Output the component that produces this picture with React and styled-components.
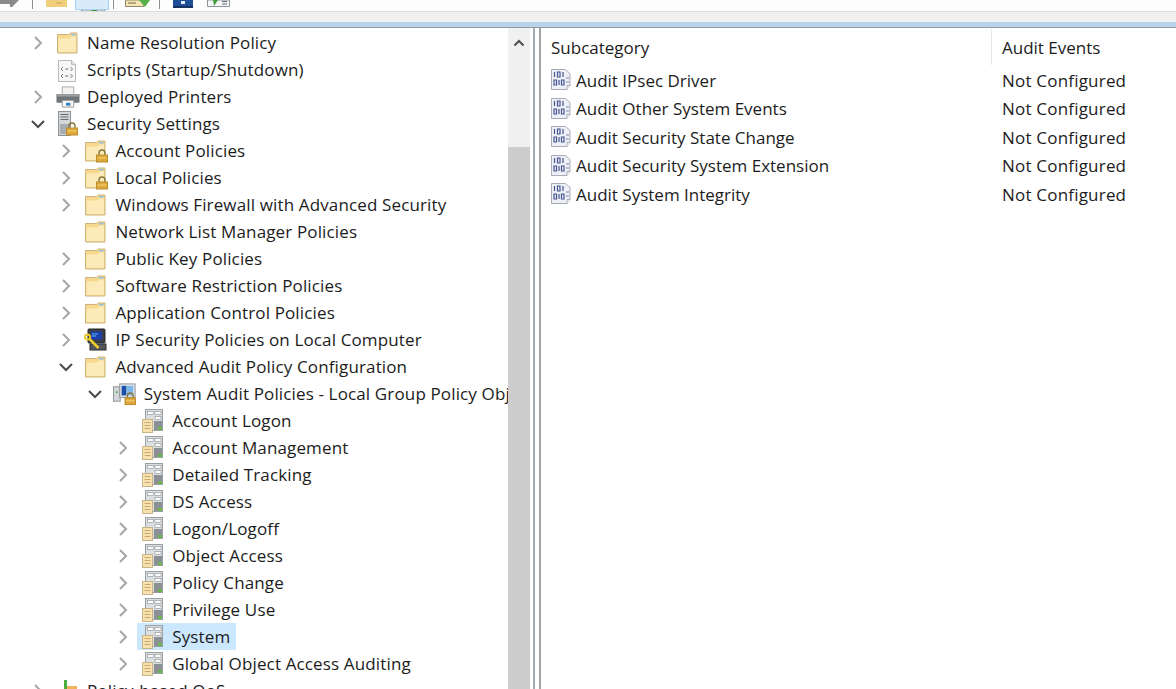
import styled, { createGlobalStyle } from "styled-components";

const GlobalStyle = createGlobalStyle`
  html, body {
    margin: 0;
    height: 100%;
    overflow: hidden;
    background: #fff;
  }
  #root {
    height: 100%;
  }
`;

const LockGlyph = ({ x, y }) => (
  <g transform={`translate(${x} ${y})`}>
    <path d="M3 5V3a3 3 0 0 1 6 0v2" fill="none" stroke="#8a7440" strokeWidth="1.4" />
    <rect x="0.5" y="5" width="11" height="7" fill="#dfa838" stroke="#b98d30" />
    <path d="M1.5 8h9" stroke="#f4d27a" />
  </g>
);

const FolderIcon = ({ lock }) => (
  <svg width="24" height="24" viewBox="0 0 24 24">
    <path d="M1.5 5.5V3.5h11l2-1.5h6.5V22H1.5z" fill="#f6d98e" stroke="#cdb27a" />
    <path d="M2.5 7.5h11l2-2h4.5V21H2.5z" fill="#fcebb8" />
    <path d="M15 3h4.5v1.5H15z" fill="#8fc1e8" />
    {lock && <LockGlyph x={12} y={11} />}
  </svg>
);

const ScriptIcon = () => (
  <svg width="24" height="24" viewBox="0 0 24 24">
    <path d="M2.5 2.5h13l4 4v17h-17z" fill="#f7f7f7" stroke="#b9b9b9" />
    <path d="M15.5 2.5v4h4" fill="#e2e2e2" stroke="#b9b9b9" />
    <path d="M7 9l-2 2 2 2M9 11h3.5M14.5 9l2 2-2 2M7 16l-2 2 2 2M9 18h3.5M14.5 16l2 2-2 2" fill="none" stroke="#6f7a80" />
  </svg>
);

const PrinterIcon = () => (
  <svg width="25" height="24" viewBox="0 0 25 24">
    <path d="M6.5 1.5h12v8h-12z" fill="#f2f2f2" stroke="#a9a9a9" />
    <rect x="0.5" y="9" width="24" height="9" rx="1" fill="#6f7478" />
    <rect x="0.5" y="9" width="24" height="2.5" fill="#9a9fa3" />
    <path d="M6.5 15.5h12v7h-12z" fill="#f7f7f7" stroke="#9a9a9a" />
    <path d="M10.5 18h4.5v3h-4.5z" fill="#2f7fc4" />
  </svg>
);

const ServerLockIcon = () => (
  <svg width="24" height="26" viewBox="0 0 24 26">
    <rect x="2.5" y="0.5" width="12" height="24" fill="#d3d7da" stroke="#8d9296" />
    <path d="M4.5 3.5h8M4.5 6h8M4.5 8.5h8" stroke="#666b70" />
    <rect x="4" y="13" width="9" height="10" fill="#a8adb2" />
    <LockGlyph x={10} y={12} />
  </svg>
);

const IpKeyIcon = () => (
  <svg width="24" height="24" viewBox="0 0 24 24">
    <rect x="4" y="1" width="17" height="14" rx="1" fill="#3b3f44" stroke="#23262a" />
    <rect x="7" y="3.5" width="11" height="8" fill="#1c3fb0" />
    <path d="M8 6h6M8 8h4" stroke="#59b3e8" />
    <rect x="6" y="16" width="16" height="6" fill="#54585c" stroke="#2a2c30" />
    <circle cx="3.5" cy="9" r="2.6" fill="none" stroke="#e8cd28" strokeWidth="2" />
    <path d="M5.5 11l9 9" stroke="#e8cd28" strokeWidth="2.6" />
  </svg>
);

const SystemAuditIcon = () => (
  <svg width="25" height="24" viewBox="0 0 25 24">
    <rect x="0.5" y="4.5" width="7" height="15" fill="#d4d7da" stroke="#8d9296" />
    <path d="M3 10h2" stroke="#3caa3c" strokeWidth="1.5" />
    <rect x="7" y="1.5" width="16" height="14" fill="#dfe7ee" stroke="#8d9296" />
    <rect x="9" y="3.5" width="5" height="10" fill="#1d4fa8" />
    <rect x="14" y="3.5" width="7" height="10" fill="#7db8e6" />
    <LockGlyph x={12} y={11} />
  </svg>
);

const PolicyIcon = () => (
  <svg width="24" height="24" viewBox="0 0 24 24">
    <rect x="4.5" y="0.5" width="17" height="21" fill="#dcdfe1" stroke="#9a9fa3" />
    <rect x="6.5" y="2.5" width="6" height="3" fill="#fdfdfd" stroke="#8a8f93" strokeWidth="0.6" />
    <rect x="14" y="2.5" width="6" height="3" fill="#fdfdfd" stroke="#8a8f93" strokeWidth="0.6" />
    <rect x="14" y="7.5" width="6" height="3" fill="#fdfdfd" stroke="#8a8f93" strokeWidth="0.6" />
    <rect x="13" y="12" width="8" height="9" fill="#8b9094" />
    <rect x="1.5" y="10.5" width="10" height="13" fill="#f6e1b0" stroke="#c9b389" />
    <path d="M3.5 13.5h6M3.5 16.5h6M3.5 19.5h6" stroke="#cfa868" />
    <rect x="17.5" y="18" width="3" height="3" fill="#5fc23a" />
  </svg>
);

const QosIcon = () => (
  <svg width="24" height="24" viewBox="0 0 24 24">
    <path d="M8 1h3v22H8z" fill="#4caf3f" />
    <path d="M11 7h10v16H11z" fill="#f0b35c" />
    <path d="M2 12h6v11H2z" fill="#7d8287" />
  </svg>
);

const BinaryIcon = () => (
  <svg width="20" height="22" viewBox="0 0 20 22">
    <path d="M0.5 0.5h14l4.5 4v12l-3 4H0.5z" fill="#eef0f8" stroke="#a9acb8" />
    <path d="M16 20.5v-4h3" fill="#fff" stroke="#a9acb8" />
    <path
      d="M3.5 3v5M6.5 3h2.5v5H6.5zM12 3v5M3 11h2.5v5H3zM8 11v5M10.5 11H13v5h-2.5z"
      fill="none"
      stroke="#46558f"
      strokeWidth="1.2"
    />
    <path d="M15 9h3M15 13h3" stroke="#7d86ad" />
  </svg>
);

const ICONS = {
  folder: <FolderIcon />,
  lockFolder: <FolderIcon lock />,
  script: <ScriptIcon />,
  printer: <PrinterIcon />,
  serverLock: <ServerLockIcon />,
  ipKey: <IpKeyIcon />,
  systemAudit: <SystemAuditIcon />,
  policy: <PolicyIcon />,
  qos: <QosIcon />,
};

const TREE = [
  { depth: 0, arrow: "closed", icon: "folder", label: "Name Resolution Policy" },
  { depth: 0, icon: "script", label: "Scripts (Startup/Shutdown)" },
  { depth: 0, arrow: "closed", icon: "printer", label: "Deployed Printers" },
  { depth: 0, arrow: "open", icon: "serverLock", label: "Security Settings" },
  { depth: 1, arrow: "closed", icon: "lockFolder", label: "Account Policies" },
  { depth: 1, arrow: "closed", icon: "lockFolder", label: "Local Policies" },
  { depth: 1, arrow: "closed", icon: "folder", label: "Windows Firewall with Advanced Security" },
  { depth: 1, icon: "folder", label: "Network List Manager Policies" },
  { depth: 1, arrow: "closed", icon: "folder", label: "Public Key Policies" },
  { depth: 1, arrow: "closed", icon: "folder", label: "Software Restriction Policies" },
  { depth: 1, arrow: "closed", icon: "folder", label: "Application Control Policies" },
  { depth: 1, arrow: "closed", icon: "ipKey", label: "IP Security Policies on Local Computer" },
  { depth: 1, arrow: "open", icon: "folder", label: "Advanced Audit Policy Configuration" },
  { depth: 2, arrow: "open", icon: "systemAudit", label: "System Audit Policies - Local Group Policy Object" },
  { depth: 3, icon: "policy", label: "Account Logon" },
  { depth: 3, arrow: "closed", icon: "policy", label: "Account Management" },
  { depth: 3, arrow: "closed", icon: "policy", label: "Detailed Tracking" },
  { depth: 3, arrow: "closed", icon: "policy", label: "DS Access" },
  { depth: 3, arrow: "closed", icon: "policy", label: "Logon/Logoff" },
  { depth: 3, arrow: "closed", icon: "policy", label: "Object Access" },
  { depth: 3, arrow: "closed", icon: "policy", label: "Policy Change" },
  { depth: 3, arrow: "closed", icon: "policy", label: "Privilege Use" },
  { depth: 3, arrow: "closed", icon: "policy", label: "System", selected: true },
  { depth: 3, arrow: "closed", icon: "policy", label: "Global Object Access Auditing" },
  { depth: 0, arrow: "closed", icon: "qos", label: "Policy-based QoS" },
];

const SUBCATEGORIES = [
  "Audit IPsec Driver",
  "Audit Other System Events",
  "Audit Security State Change",
  "Audit Security System Extension",
  "Audit System Integrity",
];

const Chevron = ({ open }) => (
  <svg width="14" height="14" viewBox="0 0 14 14">
    <path
      d={open ? "M1 4l6 6 6-6" : "M4 1l6 6-6 6"}
      fill="none"
      stroke={open ? "#4a4a4a" : "#a6a6a6"}
      strokeWidth="2"
    />
  </svg>
);

const App = () => (
  <Page>
    <GlobalStyle />
    <Toolbar>
      <ToolSlot $width={32}>
        <svg width="20" height="7" viewBox="0 0 20 7">
          <path d="M0 0h19l-7 7h-2V4H0z" fill="#8a8a8a" />
        </svg>
      </ToolSlot>
      <ToolSeparator />
      <ToolSlot $width={42} $pad={13}>
        <svg width="21" height="7" viewBox="0 0 21 7">
          <path d="M0 0h21v7H0z" fill="#f0cf7c" />
          <path d="M10 3h6" stroke="#c9a85a" />
        </svg>
      </ToolSlot>
      <ToolButton>
        <svg width="24" height="8" viewBox="0 0 24 8">
          <path d="M0.5 0v7.5h23V0z" fill="#f4f6f8" stroke="#7f8b99" />
          <path d="M10 0h6v6z" fill="#3f9c3c" />
          <path d="M2.5 2.5h5M18 2.5h4M2.5 5h5M18 5h4" stroke="#5d6b7a" />
        </svg>
      </ToolButton>
      <ToolSeparator />
      <ToolSlot $width={45} $pad={11}>
        <svg width="25" height="7" viewBox="0 0 25 7">
          <path d="M0.5 0v6.5h18V0z" fill="#f6e3b2" stroke="#8f8a70" />
          <path d="M3 3h8" stroke="#6f6a50" />
          <path d="M14 0h11l-5 7z" fill="#57b04a" />
        </svg>
      </ToolSlot>
      <ToolSeparator />
      <ToolSlot $width={47} $pad={13}>
        <svg width="20" height="8" viewBox="0 0 20 8">
          <rect width="20" height="7" fill="#1e4f96" />
          <rect x="8" y="1" width="4" height="3" fill="#e8eef6" />
          <rect y="6" width="20" height="2" fill="#17335f" />
        </svg>
      </ToolSlot>
      <ToolSlot $width={34}>
        <svg width="23" height="7" viewBox="0 0 23 7">
          <path d="M0.5 0v6.5h22V0z" fill="#f6f6f6" stroke="#8a949c" />
          <path d="M6 0h5L7 6z" fill="#3f9c3c" />
          <path d="M15 1.5h5M15 4h5" stroke="#5d6b7a" />
        </svg>
      </ToolSlot>
    </Toolbar>
    <Strip />
    <TitleBand />
    <Main>
      <TreePane>
        <TreeList>
          {TREE.map((item) => (
            <TreeRow key={item.label} $depth={item.depth}>
              <ChevronBox>{item.arrow && <Chevron open={item.arrow === "open"} />}</ChevronBox>
              <NodeBody $selected={item.selected}>
                <NodeIcon>{ICONS[item.icon]}</NodeIcon>
                <span>{item.label}</span>
              </NodeBody>
            </TreeRow>
          ))}
        </TreeList>
        <Scrollbar>
          <ScrollButton>
            <svg width="12" height="10" viewBox="0 0 12 10">
              <path d="M1.5 7.5L6 3l4.5 4.5" fill="none" stroke="#505050" strokeWidth="2" />
            </svg>
          </ScrollButton>
          <ScrollGap />
          <ScrollThumb />
        </Scrollbar>
      </TreePane>
      <Splitter />
      <ListPane>
        <ListHeader>
          <NameHeader>Subcategory</NameHeader>
          <EventsHeader>Audit Events</EventsHeader>
        </ListHeader>
        {SUBCATEGORIES.map((name) => (
          <ListRow key={name}>
            <NameCell>
              <BinaryIcon />
              <span>{name}</span>
            </NameCell>
            <EventsCell>Not Configured</EventsCell>
          </ListRow>
        ))}
      </ListPane>
    </Main>
  </Page>
);

const Page = styled.div`
  height: 689px;
  display: flex;
  flex-direction: column;
  overflow: hidden;
  font-family: "Open Sans", "Noto Sans", sans-serif;
  font-size: 17px;
  color: #1c1c1c;
  background: #fff;
`;

const Toolbar = styled.div`
  height: 11px;
  flex: none;
  display: flex;
  align-items: flex-start;
  background: #fdfdfd;
  overflow: hidden;
`;

const ToolSlot = styled.div`
  width: ${(p) => p.$width}px;
  padding-left: ${(p) => p.$pad || 0}px;
  box-sizing: border-box;
  height: 9px;
  display: flex;
  align-items: flex-start;
`;

const ToolSeparator = styled.div`
  width: 1px;
  height: 9px;
  background: #8f8f8f;
`;

const ToolButton = styled.div`
  width: 34px;
  height: 10px;
  margin-right: 4px;
  box-sizing: border-box;
  padding-left: 5px;
  background: #d9ebfa;
  border: 1px solid #a8d2f2;
  border-top: none;
`;

const Strip = styled.div`
  height: 10px;
  flex: none;
  background: #f0f0f0;
  border-top: 1px solid #dcdcdc;
`;

const TitleBand = styled.div`
  height: 5px;
  flex: none;
  background: #b9d3ea;
  border-bottom: 1px solid #8e9aa5;
`;

const Main = styled.div`
  flex: 1;
  display: flex;
  min-height: 0;
`;

const TreePane = styled.div`
  width: 533px;
  flex: none;
  display: flex;
  overflow: hidden;
`;

const TreeList = styled.div`
  width: 508px;
  flex: none;
  padding-top: 1px;
  overflow: hidden;
  letter-spacing: 0.14px;
`;

const TreeRow = styled.div`
  height: 27px;
  display: flex;
  align-items: center;
  padding-left: ${(p) => 29 + p.$depth * 28.4}px;
  white-space: nowrap;
`;

const ChevronBox = styled.div`
  width: 18px;
  height: 14px;
  flex: none;
  display: flex;
  justify-content: center;
`;

const NodeBody = styled.div`
  display: flex;
  align-items: center;
  height: 27px;
  padding: 0 6px 0 4px;
  margin-left: 5px;
  background: ${(p) => (p.$selected ? "#cce8ff" : "transparent")};
`;

const NodeIcon = styled.div`
  width: 24px;
  height: 24px;
  flex: none;
  display: flex;
  align-items: center;
  justify-content: center;
  margin-right: 7px;
`;

const Scrollbar = styled.div`
  width: 22px;
  flex: none;
  display: flex;
  flex-direction: column;
  background: #f0f0f0;
`;

const ScrollButton = styled.div`
  height: 30px;
  display: flex;
  align-items: center;
  justify-content: center;
`;

const ScrollGap = styled.div`
  height: 89px;
`;

const ScrollThumb = styled.div`
  flex: 1;
  background: #cdcdcd;
`;

const Splitter = styled.div`
  width: 4px;
  flex: none;
  background: #fff;
  border-left: 2px solid #a3acb4;
  border-right: 2px solid #a3a3a3;
`;

const ListPane = styled.div`
  flex: 1;
  min-width: 0;
`;

const ListHeader = styled.div`
  height: 38px;
  display: flex;
  align-items: center;
`;

const NameHeader = styled.div`
  width: 451px;
  height: 36px;
  flex: none;
  display: flex;
  align-items: center;
  box-sizing: border-box;
  padding-left: 10px;
  border-right: 1px solid #e3e8ee;
`;

const EventsHeader = styled.div`
  padding-left: 10px;
`;

const ListRow = styled.div`
  height: 28.5px;
  display: flex;
  align-items: center;
`;

const NameCell = styled.div`
  width: 451px;
  flex: none;
  display: flex;
  align-items: center;
  gap: 5px;
  padding-left: 10px;
  box-sizing: border-box;
`;

const EventsCell = styled.div`
  padding-left: 10px;
  white-space: nowrap;
  letter-spacing: 0.2px;
`;

export default App;
